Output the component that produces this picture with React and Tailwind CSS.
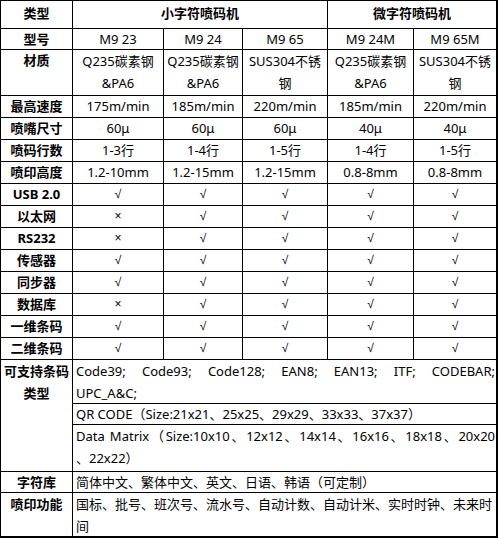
const CHECK = '√'
const CROSS = '×'

const specRows = [
  ['型号', 'M9 23', 'M9 24', 'M9 65', 'M9 24M', 'M9 65M'],
  ['材质', ['Q235碳素钢', '&PA6'], ['Q235碳素钢', '&PA6'], ['SUS304不锈', '钢'], ['Q235碳素钢', '&PA6'], ['SUS304不锈', '钢']],
  ['最高速度', '175m/min', '185m/min', '220m/min', '185m/min', '220m/min'],
  ['喷嘴尺寸', '60μ', '60μ', '60μ', '40μ', '40μ'],
  ['喷码行数', '1-3行', '1-4行', '1-5行', '1-4行', '1-5行'],
  ['喷印高度', '1.2-10mm', '1.2-15mm', '1.2-15mm', '0.8-8mm', '0.8-8mm'],
  ['USB 2.0', CHECK, CHECK, CHECK, CHECK, CHECK],
  ['以太网', CROSS, CHECK, CHECK, CHECK, CHECK],
  ['RS232', CROSS, CHECK, CHECK, CHECK, CHECK],
  ['传感器', CHECK, CHECK, CHECK, CHECK, CHECK],
  ['同步器', CHECK, CHECK, CHECK, CHECK, CHECK],
  ['数据库', CROSS, CHECK, CHECK, CHECK, CHECK],
  ['一维条码', CHECK, CHECK, CHECK, CHECK, CHECK],
  ['二维条码', CHECK, CHECK, CHECK, CHECK, CHECK],
]

function Lines({ value }) {
  if (Array.isArray(value)) {
    return (
      <div className="leading-[22px]">
        {value.map((line) => (
          <div key={line}>{line}</div>
        ))}
      </div>
    )
  }
  if (value === CHECK || value === CROSS) {
    // the CJK font draws a tall radical, Arial's is closer to the source
    return <div className="font-['Liberation_Sans',sans-serif] text-[12px] leading-[21px]">{value}</div>
  }
  return <div className="leading-[21px]">{value}</div>
}

function LabelCell({ children, last = false }) {
  return (
    <div
      className={[
        'border-r border-black text-center font-bold',
        last ? 'border-b-2' : 'border-b',
      ].join(' ')}
    >
      {children}
    </div>
  )
}

function WideCell({ children, last = false }) {
  return (
    <div
      className={[
        'col-span-5 border-r-2 border-black pl-[3px] pr-[1px] leading-[22px]',
        last ? 'border-b-2' : 'border-b',
      ].join(' ')}
    >
      {children}
    </div>
  )
}

export default function App() {
  return (
    <div className="w-[498px] bg-white font-['Noto_Sans','Noto_Sans_CJK_SC',sans-serif] text-[13px] text-black">
      <div className="grid grid-cols-[72px_91px_79px_85px_86px_84px] grid-rows-[28px_21px_46px_repeat(12,22px)_44px_21px_47px_21px_45px] border-l border-t border-black">
        {/* header */}
        <div className="flex items-center justify-center border-r border-b border-black pb-[2px] font-bold">类型</div>
        <div className="col-span-3 flex items-center justify-center border-r border-b border-black pb-[2px] font-bold">
          小字符喷码机
        </div>
        <div className="col-span-2 flex items-center justify-center border-r-2 border-b border-black pb-[2px] font-bold">
          微字符喷码机
        </div>

        {specRows.map((row) =>
          row.map((cell, i) => {
            if (i === 0) {
              return (
                <LabelCell key={row[0]}>
                  <Lines value={cell} />
                </LabelCell>
              )
            }
            return (
              <div
                key={row[0] + i}
                className={[
                  'border-b border-black text-center',
                  i === 5 ? 'border-r-2' : 'border-r',
                ].join(' ')}
              >
                <Lines value={cell} />
              </div>
            )
          }),
        )}

        {/* barcode types */}
        <div className="row-span-3 border-r border-b border-black text-center font-bold leading-[22px]">
          <div>可支持条码</div>
          <div>类型</div>
        </div>
        <WideCell>
          <div className="whitespace-nowrap text-justify [text-align-last:justify]">
            Code39; Code93; Code128; EAN8; EAN13; ITF; CODEBAR;
          </div>
          <div>UPC_A&amp;C;</div>
        </WideCell>
        <WideCell>
          <div className="whitespace-nowrap leading-[21px]">QR CODE（Size:21x21、25x25、29x29、33x33、37x37）</div>
        </WideCell>
        <WideCell>
          <div className="whitespace-nowrap text-justify [text-align-last:justify]">
            Data Matrix（Size:10x10、12x12、14x14、16x16、18x18、20x20
          </div>
          <div>、22x22）</div>
        </WideCell>

        <LabelCell>
          <div className="leading-[21px]">字符库</div>
        </LabelCell>
        <WideCell>
          <div className="leading-[21px]">简体中文、繁体中文、英文、日语、韩语（可定制）</div>
        </WideCell>

        <LabelCell last>
          <div className="leading-[22px]">喷印功能</div>
        </LabelCell>
        <WideCell last>
          <div className="whitespace-nowrap">国标、批号、班次号、流水号、自动计数、自动计米、实时时钟、未来时</div>
          <div>间</div>
        </WideCell>
      </div>
    </div>
  )
}
